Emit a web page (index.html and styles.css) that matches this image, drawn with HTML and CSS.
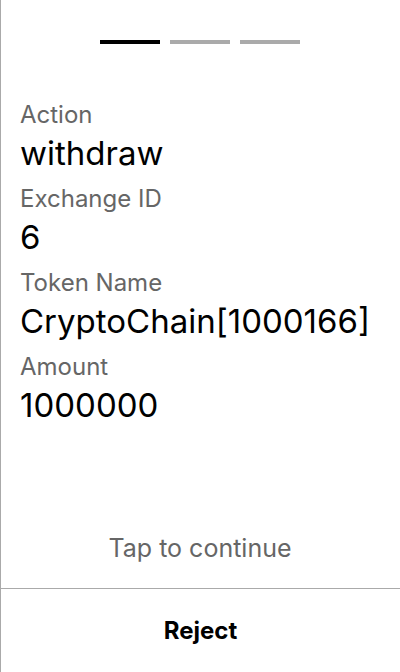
FILE: index.html
```html
<!DOCTYPE html>
<html lang="en">
<head>
<meta charset="utf-8">
<title>Confirm</title>
<link rel="stylesheet" href="styles.css">
</head>
<body>
<div class="screen">
  <div class="content">
    <div class="steps">
      <span class="step active"></span>
      <span class="step"></span>
      <span class="step"></span>
    </div>
    <div class="fields">
      <div class="field">
        <div class="label">Action</div>
        <div class="value">withdraw</div>
      </div>
      <div class="field">
        <div class="label">Exchange ID</div>
        <div class="value">6</div>
      </div>
      <div class="field">
        <div class="label">Token Name</div>
        <div class="value">CryptoChain[1000166]</div>
      </div>
      <div class="field">
        <div class="label">Amount</div>
        <div class="value">1000000</div>
      </div>
    </div>
    <div class="hint">Tap to continue</div>
  </div>
  <div class="footer">
    <button class="reject">Reject</button>
  </div>
</div>
</body>
</html>
```
FILE: styles.css
```css
html, body {
  margin: 0;
  padding: 0;
  background: #fff;
}
body {
  font-family: Inter, "Noto Sans", sans-serif;
  color: #000;
}
.screen {
  height: 672px;
  box-shadow: inset 1px 0 0 #aaa;
  display: flex;
  flex-direction: column;
}
.content {
  flex: 1;
  display: flex;
  flex-direction: column;
  padding: 40px 20px 0;
}
.steps {
  display: flex;
  justify-content: center;
  gap: 10px;
}
.step {
  width: 60px;
  height: 4px;
  background: #aaa;
}
.step.active {
  background: #000;
}
.fields {
  margin-top: 56px;
  display: flex;
  flex-direction: column;
  gap: 11px;
}
.label {
  font-size: 24px;
  line-height: 30px;
  margin-bottom: 3px;
  color: #666;
}
.value {
  font-size: 33px;
  line-height: 40px;
  color: #000;
}
.hint {
  margin-top: auto;
  margin-bottom: 25px;
  text-align: center;
  font-size: 25px;
  line-height: 30px;
  color: #666;
}
.footer {
  border-top: 1px solid #aaa;
  margin-left: 1px;
  height: 83px;
  display: flex;
}
.reject {
  flex: 1;
  border: 0;
  background: transparent;
  font-family: inherit;
  font-size: 24px;
  font-weight: 700;
  color: #000;
  padding: 0;
}
```
